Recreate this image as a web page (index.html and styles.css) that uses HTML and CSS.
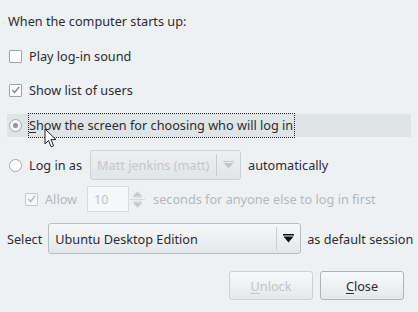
FILE: index.html
```html
<!DOCTYPE html>
<html>
<head>
<meta charset="utf-8">
<link rel="stylesheet" href="styles.css">
</head>
<body>
<div class="page">
  <div class="heading">When the computer starts up:</div>

  <div class="row r1">
    <span class="check"></span>
    <span class="label">Play log-in sound</span>
  </div>

  <div class="row r2">
    <span class="check checked">
      <svg width="12" height="12" viewBox="0 0 12 12"><path d="M2.5 6 L5 8.8 L10 2.5" fill="none" stroke="#8a8f93" stroke-width="1.6"/></svg>
    </span>
    <span class="label">Show list of users</span>
  </div>

  <div class="row r3 hl">
    <span class="radio selected"><span class="dot"></span></span>
    <span class="label focus"><u>S</u>how the screen for choosing who will log in</span>
    <svg class="cursor" width="14" height="21" viewBox="0 0 14 21"><path d="M1 1 L1 16 L4.5 12.5 L7.2 18.8 L9.6 17.8 L7 11.6 L12 11.6 Z" fill="#fff" stroke="#222" stroke-width="1" stroke-linejoin="round"/></svg>
  </div>

  <div class="row r4">
    <span class="radio"></span>
    <span class="label">Log in as</span>
    <span class="combo disabled user">
      <span class="combo-text">Matt jenkins (matt)</span>
      <span class="combo-btn">
        <svg width="11" height="8" viewBox="0 0 11 8"><path d="M0 0.5 H11" stroke="#c2c6ca" stroke-width="1"/><path d="M0.5 2 L10.5 2 L5.5 7.5 Z" fill="#c2c6ca"/></svg>
      </span>
    </span>
    <span class="label">automatically</span>
  </div>

  <div class="row r5">
    <span class="check checked dis">
      <svg width="12" height="12" viewBox="0 0 12 12"><path d="M2.5 6 L5 8.8 L10 2.5" fill="none" stroke="#b9bec2" stroke-width="1.6"/></svg>
    </span>
    <span class="label dim">Allow</span>
    <span class="spin">
      <span class="spin-entry">10</span>
      <span class="spin-btns">
        <svg width="17" height="25" viewBox="0 0 17 25"><path d="M4 9 L8.5 4.5 L13 9 Z" fill="#c4c8cb"/><path d="M4 10 H13" stroke="#c4c8cb"/><path d="M1 12.5 H16" stroke="#d6dadd"/><path d="M4 16 L8.5 20.5 L13 16 Z" fill="#c4c8cb"/><path d="M4 15 H13" stroke="#c4c8cb"/></svg>
      </span>
    </span>
    <span class="label dim">seconds for anyone else to log in first</span>
  </div>

  <div class="row r6">
    <span class="label">Select</span>
    <span class="combo session">
      <span class="combo-text">Ubuntu Desktop Edition</span>
      <span class="combo-btn">
        <svg width="11" height="9" viewBox="0 0 11 9"><path d="M0 0.75 H11" stroke="#111" stroke-width="1.5"/><path d="M0.5 2.5 L10.5 2.5 L5.5 8.5 Z" fill="#111"/></svg>
      </span>
    </span>
    <span class="label">as default session</span>
  </div>

  <div class="buttons">
    <span class="btn disabled"><u>U</u>nlock</span>
    <span class="btn"><u>C</u>lose</span>
  </div>
</div>
</body>
</html>
```

FILE: styles.css
```css
html, body {
  margin: 0;
  padding: 0;
  background: #eef1f4;
}
body {
  width: 418px;
  height: 312px;
  overflow: hidden;
  font-family: "Noto Sans", "Open Sans", sans-serif;
  font-size: 12.7px;
  color: #2b2d2f;
}
.page {
  display: flex;
  flex-direction: column;
  padding: 9px 7px 0 7px;
}
.heading {
  height: 24px;
  line-height: 24px;
  padding-left: 1px;
}
.row {
  display: flex;
  align-items: center;
  padding-left: 2px;
  gap: 7px;
  position: relative;
}
.r1 { margin-top: 11px; height: 24px; }
.r2 { margin-top: 10px; height: 24px; }
.r3 { margin-top: 12px; height: 23px; }
.r4 { margin-top: 13px; height: 30px; }
.r5 { margin-top: 6px; height: 26px; padding-left: 18px; }
.r6 { margin-top: 11px; height: 31px; padding-left: 0; gap: 6px; }
.hl {
  background: #dfe4e7;
}
.check {
  width: 11px;
  height: 11px;
  border: 1px solid #9fa4a8;
  background: #fff;
  border-radius: 1px;
  display: flex;
  align-items: center;
  justify-content: center;
  flex: none;
}
.check svg { display: block; }
.check.dis {
  border-color: #c6cacd;
  background: #f4f6f7;
}
.radio {
  width: 11px;
  height: 11px;
  border: 1px solid #a4a9ad;
  border-radius: 50%;
  background: #fff;
  display: flex;
  align-items: center;
  justify-content: center;
  flex: none;
}
.radio.selected {
  background: #f3f4f5;
}
.dot {
  width: 5px;
  height: 5px;
  border-radius: 50%;
  background: #8f9498;
}
.label {
  white-space: nowrap;
}
.focus {
  outline: 1px dotted #222;
  outline-offset: 0;
  padding: 2px 1px 2px 0;
  line-height: 19px;
}
.focus u, .btn u { text-decoration-thickness: 1px; text-underline-offset: 2px; }
.dim {
  color: #b3b8bc;
}
.cursor {
  position: absolute;
  left: 37px;
  top: 14px;
}
.combo {
  display: flex;
  align-items: stretch;
  border: 1px solid #b8bdc1;
  border-radius: 3px;
  background: linear-gradient(#f7f8f9, #e4e7ea);
  box-sizing: border-box;
  flex: none;
}
.combo-text {
  flex: 1;
  display: flex;
  align-items: center;
  padding-left: 6px;
  white-space: nowrap;
}
.combo-btn {
  width: 23px;
  border-left: 1px solid #c8ccd0;
  display: flex;
  align-items: center;
  justify-content: center;
  margin: 3px 0;
}
.user {
  width: 151px;
  height: 30px;
  margin-left: 1px;
  border-color: #cfd3d6;
  background: linear-gradient(#eef0f2, #e2e5e8);
  color: #c3c7cb;
}
.session {
  width: 253px;
  height: 31px;
}
.spin {
  display: flex;
  height: 26px;
  margin-left: 3px;
}
.spin-entry {
  width: 42px;
  box-sizing: border-box;
  border: 1px solid #d8dcdf;
  background: #f6f7f8;
  color: #c0c4c8;
  display: flex;
  align-items: center;
  padding-left: 6px;
}
.spin-btns {
  width: 17px;
  display: flex;
  align-items: center;
}
.spin-btns svg { display: block; }
.buttons {
  display: flex;
  justify-content: flex-end;
  gap: 7px;
  margin-top: 17px;
  padding-right: 7px;
}
.btn {
  width: 84px;
  height: 29px;
  box-sizing: border-box;
  border: 1px solid #aeb3b7;
  border-radius: 3px;
  background: linear-gradient(#f8f9fa, #e5e8eb);
  display: flex;
  align-items: center;
  justify-content: center;
}
.btn.disabled {
  color: #c1c5c9;
  border-color: #cdd1d4;
}
```
